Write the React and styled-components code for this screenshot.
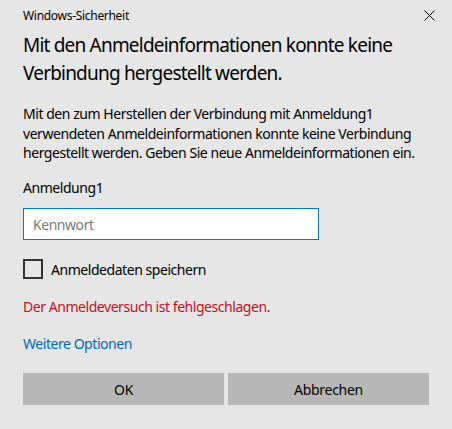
import React from "react";
import styled, {createGlobalStyle} from "styled-components";

const GlobalStyle = createGlobalStyle`
    html, body {
      margin: 0;
      padding: 0;
      background: #e6e6e6;
    }
    * {
      box-sizing: border-box;
    }
`;

const DialogWrapper = styled.div`
      display: flex;
      flex-direction: column;
      width: 452px;
      height: 429px;
      padding: 0 23px;
      background: #e6e6e6;
      color: #000;
      font-family: "Noto Sans", "Open Sans", sans-serif;
`;

const TitleBar = styled.div`
      display: flex;
      justify-content: space-between;
      align-items: center;
      height: 30px;
      padding-top: 1px;
      font-size: 12px;
      letter-spacing: -0.3px;
`;

const CloseButton = styled.div`
      display: flex;
      margin-right: -8px;
      width: 16px;
      height: 16px;
      align-items: center;
      justify-content: center;
`;

const Heading = styled.h1`
      margin: 1px 0 0;
      font-size: 19px;
      font-weight: 400;
      line-height: 28px;
      letter-spacing: -0.8px;
      white-space: nowrap;
`;

const Text = styled.p`
      margin: ${({top}) => top || 0}px 0 0;
      font-size: 14px;
      line-height: 19.5px;
      letter-spacing: -0.45px;
      white-space: nowrap;
      color: ${({color}) => color || '#000'};
`;

const PasswordInput = styled.input`
      width: 296px;
      height: 32px;
      margin-top: 11px;
      padding: 0 9px;
      border: 1px solid #0078d7;
      background: #fff;
      font-family: inherit;
      font-size: 14px;
      letter-spacing: -0.45px;
      color: #000;
      outline: none;
      caret-color: #000;

      &::placeholder {
        color: #7a7a7a;
      }
`;

const CheckRow = styled.label`
      display: flex;
      align-items: center;
      gap: 8px;
      margin-top: 19px;
      font-size: 14px;
      letter-spacing: -0.45px;
`;

const CheckBox = styled.span`
      display: block;
      width: 20px;
      height: 20px;
      border: 2px solid #333;
`;

const ButtonRow = styled.div`
      display: grid;
      grid-template-columns: 1fr 1fr;
      gap: 4px;
      margin-top: 20px;
`;

const Button = styled.button`
      height: 32px;
      border: none;
      background: #b7b7b7;
      font-family: inherit;
      font-size: 14px;
      letter-spacing: -0.3px;
      color: #000;
`;

const App = () => {
    return (
        <>
            <GlobalStyle/>
            <DialogWrapper>
                <TitleBar>
                    Windows-Sicherheit
                    <CloseButton>
                        <svg width="11" height="11" viewBox="0 0 11 11">
                            <path d="M0.5 0.5L10.5 10.5M10.5 0.5L0.5 10.5" stroke="#000" strokeWidth="1"/>
                        </svg>
                    </CloseButton>
                </TitleBar>
                <Heading>Mit den Anmeldeinformationen konnte keine<br/>Verbindung hergestellt werden.</Heading>
                <Text top={17}>
                    Mit den zum Herstellen der Verbindung mit Anmeldung1<br/>
                    verwendeten Anmeldeinformationen konnte keine Verbindung<br/>
                    hergestellt werden. Geben Sie neue Anmeldeinformationen ein.
                </Text>
                <Text top={15}>Anmeldung1</Text>
                <PasswordInput type="password" placeholder="Kennwort" autoFocus/>
                <CheckRow>
                    <CheckBox/>
                    Anmeldedaten speichern
                </CheckRow>
                <Text top={18} color={'#c50f1f'}>Der Anmeldeversuch ist fehlgeschlagen.</Text>
                <Text top={17} color={'#0067c0'}>Weitere Optionen</Text>
                <ButtonRow>
                    <Button>OK</Button>
                    <Button>Abbrechen</Button>
                </ButtonRow>
            </DialogWrapper>
        </>
    )
};

export default App;
